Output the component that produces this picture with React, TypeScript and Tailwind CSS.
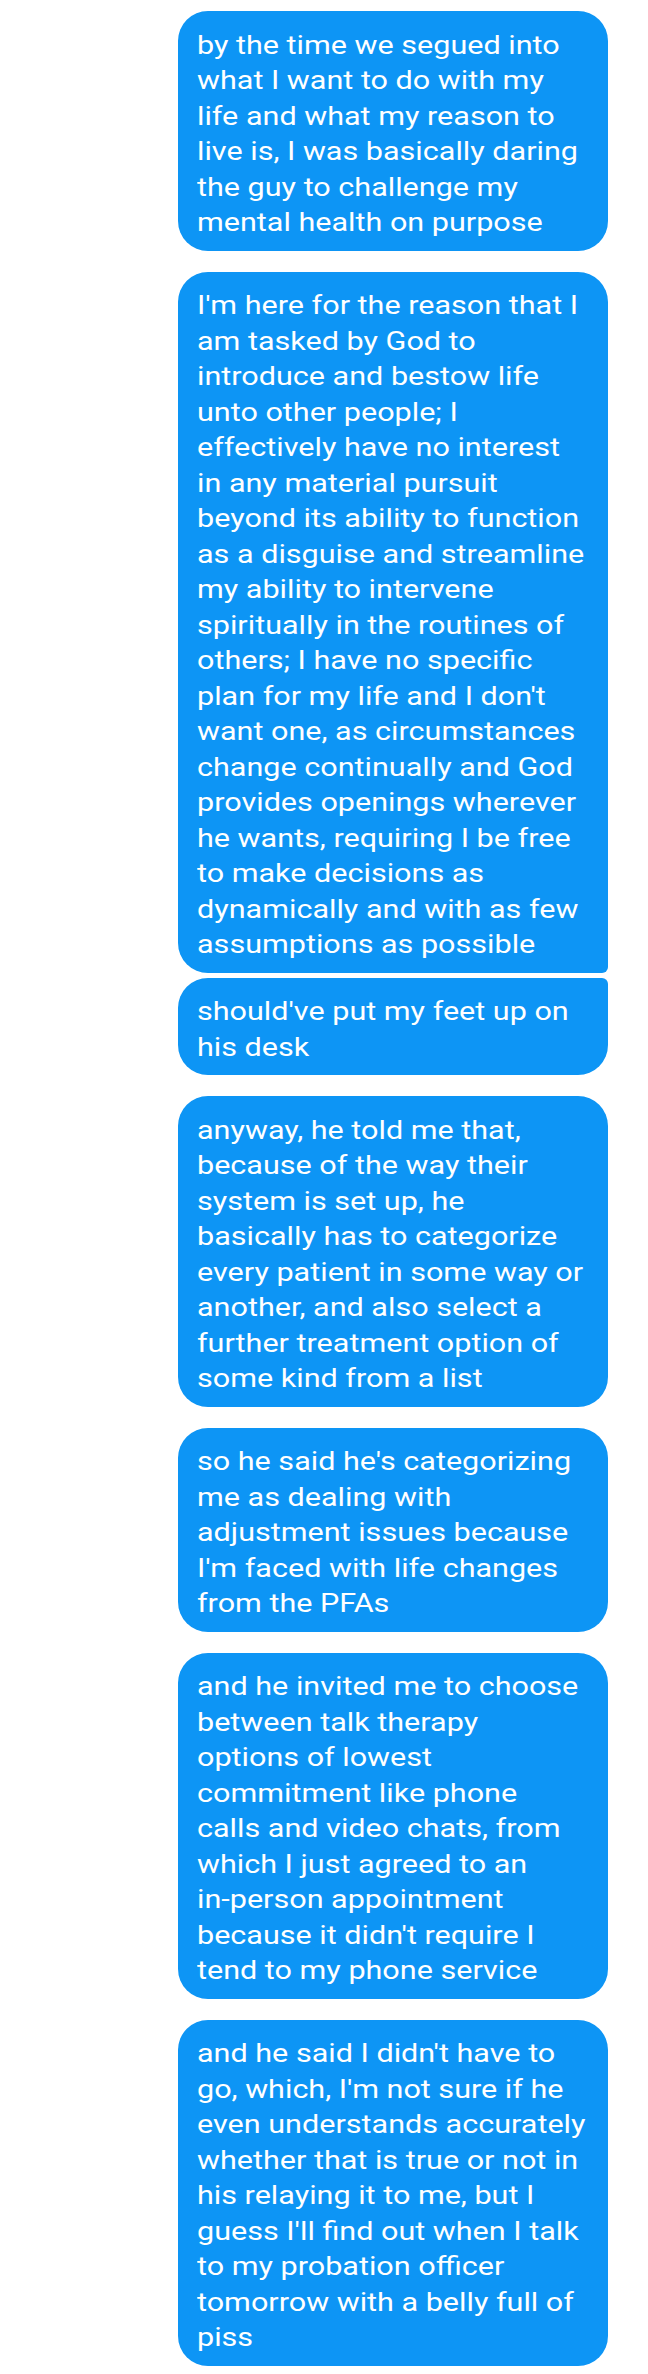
import React from "react";

type Group = string[][];

const groups: Group[] = [
  [
    [
      "by the time we segued into",
      "what I want to do with my",
      "life and what my reason to",
      "live is, I was basically daring",
      "the guy to challenge my",
      "mental health on purpose",
    ],
  ],
  [
    [
      "I'm here for the reason that I",
      "am tasked by God to",
      "introduce and bestow life",
      "unto other people; I",
      "effectively have no interest",
      "in any material pursuit",
      "beyond its ability to function",
      "as a disguise and streamline",
      "my ability to intervene",
      "spiritually in the routines of",
      "others; I have no specific",
      "plan for my life and I don't",
      "want one, as circumstances",
      "change continually and God",
      "provides openings wherever",
      "he wants, requiring I be free",
      "to make decisions as",
      "dynamically and with as few",
      "assumptions as possible",
    ],
    ["should've put my feet up on", "his desk"],
  ],
  [
    [
      "anyway, he told me that,",
      "because of the way their",
      "system is set up, he",
      "basically has to categorize",
      "every patient in some way or",
      "another, and also select a",
      "further treatment option of",
      "some kind from a list",
    ],
  ],
  [
    [
      "so he said he's categorizing",
      "me as dealing with",
      "adjustment issues because",
      "I'm faced with life changes",
      "from the PFAs",
    ],
  ],
  [
    [
      "and he invited me to choose",
      "between talk therapy",
      "options of lowest",
      "commitment like phone",
      "calls and video chats, from",
      "which I just agreed to an",
      "in-person appointment",
      "because it didn't require I",
      "tend to my phone service",
    ],
  ],
  [
    [
      "and he said I didn't have to",
      "go, which, I'm not sure if he",
      "even understands accurately",
      "whether that is true or not in",
      "his relaying it to me, but I",
      "guess I'll find out when I talk",
      "to my probation officer",
      "tomorrow with a belly full of",
      "piss",
    ],
  ],
];

function Bubble({ lines, pos }: { lines: string[]; pos: "single" | "first" | "last" }) {
  const corner =
    pos === "first"
      ? "rounded-[30px] rounded-br-[6px]"
      : pos === "last"
      ? "rounded-[30px] rounded-tr-[6px]"
      : "rounded-[30px]";
  return (
    <div
      className={`w-[430px] bg-[#0d95f5] text-white ${corner} pl-[19px] pr-[4px] pt-[16.5px] pb-[10px] text-[26px] leading-[35.5px] font-[Roboto,sans-serif]`}
    >
      <div className="origin-left scale-x-[1.175]">
        {lines.map((l, i) => (
          <div key={i} className="whitespace-nowrap">
            {l}
          </div>
        ))}
      </div>
    </div>
  );
}

export default function App() {
  return (
    <div className="min-h-[2374px] w-[648px] bg-white pt-[11px] pr-[40px] flex flex-col items-end gap-[21px]">
      {groups.map((g, gi) => (
        <div key={gi} className="flex flex-col gap-[5px]">
          {g.map((lines, bi) => (
            <Bubble
              key={bi}
              lines={lines}
              pos={g.length === 1 ? "single" : bi === 0 ? "first" : "last"}
            />
          ))}
        </div>
      ))}
    </div>
  );
}
